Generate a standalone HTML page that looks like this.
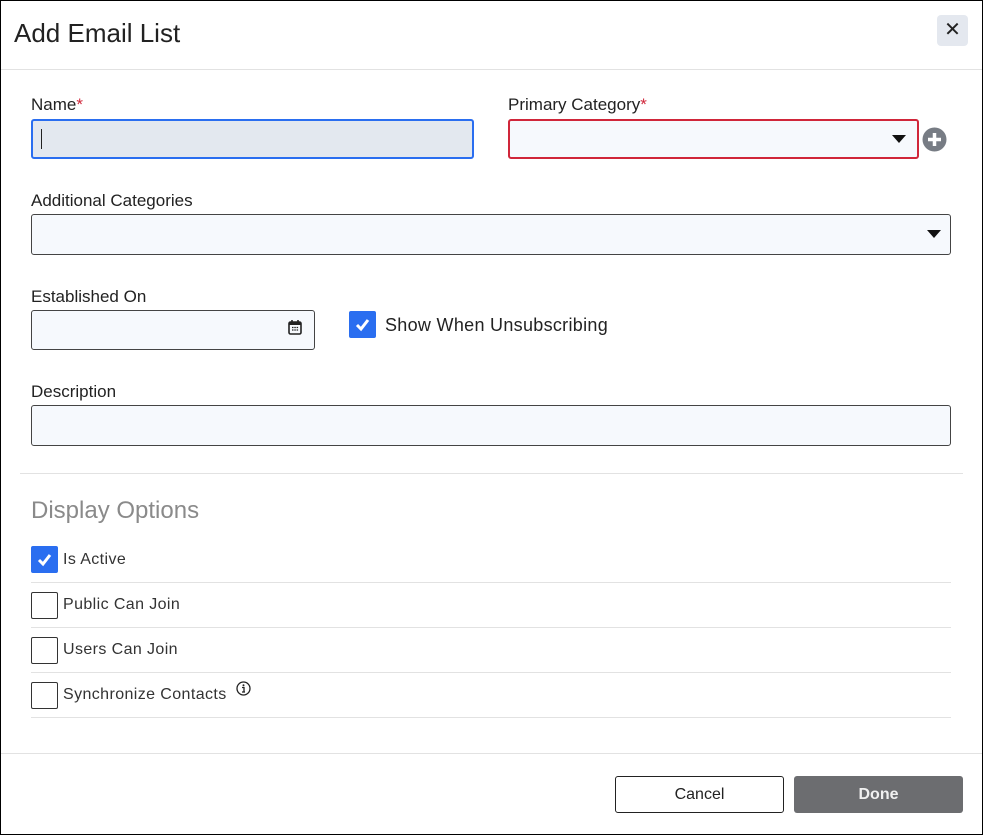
<!DOCTYPE html>
<html><head><style>
*{box-sizing:border-box;margin:0;padding:0}
body{width:983px;height:835px;position:relative;background:#fff;font-family:"Liberation Sans",sans-serif;color:#222;overflow:hidden}
.frame{position:absolute;left:0;top:0;width:983px;height:835px;border:1px solid #000}
.a{position:absolute}
.lbl{position:absolute;font-size:17px;color:#222;white-space:nowrap}
.req{color:#d0263a}
.inp{position:absolute;border:1px solid #444;border-radius:3px;background:#f6f9fd}
.line{position:absolute;height:1px;background:#e2e2e2}
.cb{position:absolute;width:27px;height:27px;border:1px solid #333;border-radius:2px;background:#fff}
.cb.on{background:#2a6ef0;border-color:#2a6ef0}
.opt{position:absolute;font-size:16px;color:#333;white-space:nowrap;letter-spacing:0.4px}
.caret{position:absolute;width:0;height:0;border-left:7px solid transparent;border-right:7px solid transparent;border-top:8px solid #111}
</style></head><body>
<div class="frame"></div>
<div class="a" style="left:14px;top:18px;font-size:26px;color:#222">Add Email List</div>
<div class="a" style="left:937px;top:15px;width:31px;height:31px;background:#e4e8ef;border-radius:4px;text-align:center;line-height:30px;font-size:20px;color:#222">✕</div>
<div class="line" style="left:1px;right:1px;top:69px"></div>

<div class="lbl" style="left:31px;top:95px">Name<span class="req">*</span></div>
<div class="inp" style="left:31px;top:119px;width:443px;height:40px;background:#e3e8ef;border:2px solid #2a6ef0"></div>
<div class="a" style="left:41px;top:129px;width:1px;height:20px;background:#222"></div>
<div class="lbl" style="left:508px;top:95px">Primary Category<span class="req">*</span></div>
<div class="inp" style="left:508px;top:119px;width:411px;height:40px;border:2px solid #d0263a"></div>
<div class="caret" style="left:892px;top:135px"></div>
<svg class="a" style="left:922px;top:127px" width="25" height="25" viewBox="0 0 25 25"><circle cx="12.5" cy="12.5" r="12" fill="#777c84"/><path d="M12.5 6v13M6 12.5h13" stroke="#fff" stroke-width="3.5"/></svg>

<div class="lbl" style="left:31px;top:191px">Additional Categories</div>
<div class="inp" style="left:31px;top:214px;width:920px;height:41px"></div>
<div class="caret" style="left:927px;top:230px"></div>

<div class="lbl" style="left:31px;top:287px">Established On</div>
<div class="inp" style="left:31px;top:310px;width:284px;height:40px"></div>
<svg class="a" style="left:288px;top:319px" width="14" height="16" viewBox="0 0 14 16"><rect x="1" y="3" width="12" height="12" rx="1.5" fill="none" stroke="#222" stroke-width="1.6"/><rect x="1" y="3" width="12" height="3" fill="#222"/><path d="M4 1v3M10 1v3" stroke="#222" stroke-width="1.6"/><path d="M4 8.5h1.5M6.3 8.5h1.5M8.6 8.5h1.5M4 11h1.5M6.3 11h1.5M8.6 11h1.5" stroke="#222" stroke-width="1.3"/></svg>
<div class="cb on" style="left:349px;top:311px"><svg width="25" height="25" viewBox="0 0 25 25"><path d="M7 13l4 4 7-9" fill="none" stroke="#fff" stroke-width="3"/></svg></div>
<div class="lbl" style="left:385px;top:315px;font-size:18px;letter-spacing:0.3px">Show When Unsubscribing</div>

<div class="lbl" style="left:31px;top:382px">Description</div>
<div class="inp" style="left:31px;top:405px;width:920px;height:41px"></div>

<div class="line" style="left:20px;width:943px;top:473px"></div>
<div class="a" style="left:31px;top:497px;font-size:24px;color:#8a8a8a">Display Options</div>

<div class="cb on" style="left:31px;top:546px"><svg width="25" height="25" viewBox="0 0 25 25"><path d="M7 13l4 4 7-9" fill="none" stroke="#fff" stroke-width="3"/></svg></div>
<div class="opt" style="left:63px;top:551px">Is Active</div>
<div class="line" style="left:31px;width:920px;top:582px"></div>
<div class="cb" style="left:31px;top:592px"></div>
<div class="opt" style="left:63px;top:596px">Public Can Join</div>
<div class="line" style="left:31px;width:920px;top:627px"></div>
<div class="cb" style="left:31px;top:637px"></div>
<div class="opt" style="left:63px;top:641px">Users Can Join</div>
<div class="line" style="left:31px;width:920px;top:672px"></div>
<div class="cb" style="left:31px;top:682px"></div>
<div class="opt" style="left:63px;top:686px">Synchronize Contacts</div>
<svg class="a" style="left:236px;top:681px" width="15" height="15" viewBox="0 0 15 15"><circle cx="7.5" cy="7.5" r="6.5" fill="none" stroke="#222" stroke-width="1.3"/><circle cx="7.5" cy="4.3" r="1" fill="#222"/><path d="M6 6.5h2v4.5M6 11h3" stroke="#222" stroke-width="1.3" fill="none"/></svg>
<div class="line" style="left:31px;width:920px;top:717px"></div>

<div class="line" style="left:1px;right:1px;top:753px"></div>
<div class="a" style="left:615px;top:776px;width:169px;height:37px;border:1px solid #222;border-radius:3px;text-align:center;line-height:35px;font-size:16px;color:#222">Cancel</div>
<div class="a" style="left:794px;top:776px;width:169px;height:37px;background:#6c6d70;border-radius:3px;text-align:center;line-height:37px;font-size:16px;font-weight:bold;color:#f0f0f0">Done</div>
</body></html>
